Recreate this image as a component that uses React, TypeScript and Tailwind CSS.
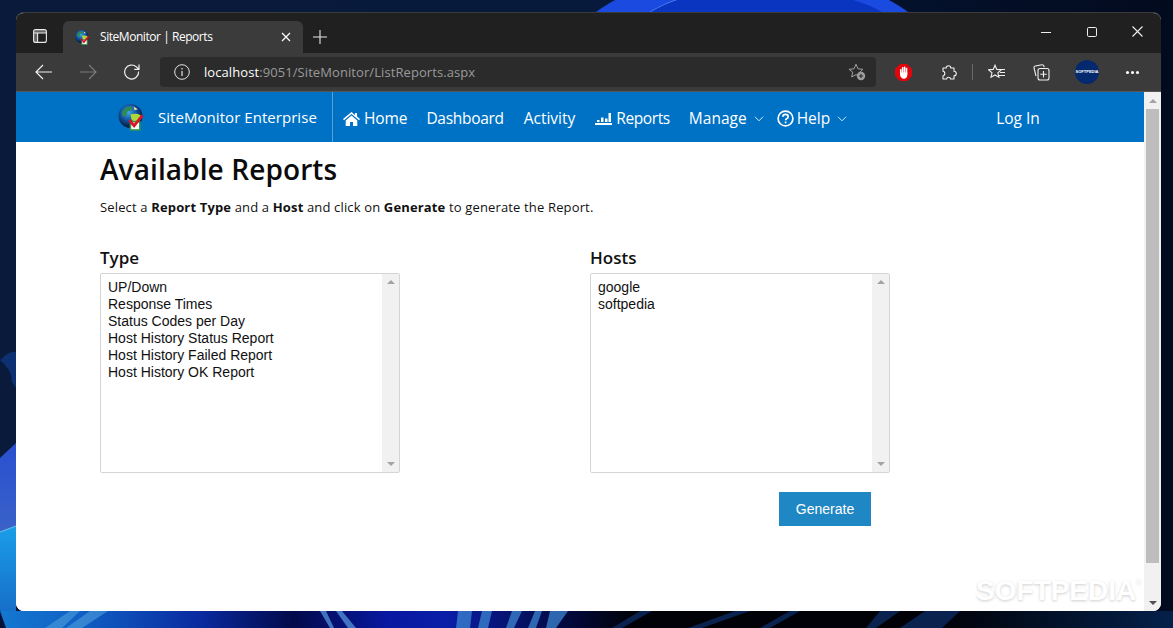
import React from "react";

const seg = { fontFamily: '"Open Sans", "Noto Sans", sans-serif' };

function Globe({ size = 26 }: { size?: number }) {
  return (
    <svg width={size} height={size} viewBox="0 0 26 26">
      <defs>
        <radialGradient id={`g${size}`} cx="0.42" cy="0.35" r="0.68">
          <stop offset="0" stopColor="#3fa6e6" />
          <stop offset="0.55" stopColor="#0d4a94" />
          <stop offset="1" stopColor="#040f22" />
        </radialGradient>
      </defs>
      <circle cx="12" cy="11.500" r="11.500" fill={`url(#g${size})`} />
      <path d="M4 7c3-4 7-5 10-4l-1 3-4 1-1 4-4 1z" fill="#2f8a52" />
      <path d="M12 10c3-1 8-1 10 1l-1 5-5 2-3-3z" fill="#a9d93c" />
      <path d="M15 2.500l4 2.500-3 1z" fill="#efe3b0" />
      <rect x="12" y="17" width="9" height="8" fill="#fff" stroke="#2e9a45" strokeWidth="1.500" />
      <path d="M11 15.500l4.500 5.500 8-10" fill="none" stroke="#e0122a" strokeWidth="2.800" />
    </svg>
  );
}

function Chevron() {
  return (
    <svg width="10" height="6" viewBox="0 0 10 6" fill="none" stroke="#d7e8f6" strokeWidth="1">
      <path d="M1 .8l4 4 4-4" />
    </svg>
  );
}

function NavLink({ children, className = "" }: { children: React.ReactNode; className?: string }) {
  return <a className={`flex items-center whitespace-nowrap text-[15.5px] text-white ${className}`}>{children}</a>;
}

function ListBox({ items }: { items: string[] }) {
  return (
    <div className="flex h-[200px] w-[300px] rounded-[2px] border border-[#d4d4d4] bg-white">
      <div
        className="flex-1 pl-[7px] pt-[5px] text-[14px] leading-[17px] text-[#111]"
        style={{ fontFamily: '"Liberation Sans", Arial, sans-serif' }}
      >
        {items.map((i) => (
          <div key={i}>{i}</div>
        ))}
      </div>
      <div className="flex w-[17px] flex-col items-center justify-between bg-[#f1f1f1] py-[6px]">
        <div className="h-0 w-0 border-x-[4px] border-b-[4px] border-x-transparent border-b-[#a3a3a3]" />
        <div className="h-0 w-0 border-x-[4px] border-t-[4px] border-x-transparent border-t-[#a3a3a3]" />
      </div>
    </div>
  );
}

export default function App() {
  return (
    <div className="relative h-[628px] w-[1173px] overflow-hidden bg-[#081530]" style={seg}>
      <svg className="absolute inset-0" width="1173" height="628" viewBox="0 0 1173 628">
        <defs>
          <linearGradient id="bg" x1="0" y1="0" x2="1" y2="0">
            <stop offset="0" stopColor="#0a1a3a" />
            <stop offset="0.5" stopColor="#071a3c" />
            <stop offset="1" stopColor="#020a1e" />
          </linearGradient>
          <linearGradient id="w1" x1="0" y1="0" x2="0" y2="1">
            <stop offset="0" stopColor="#2a4fd0" />
            <stop offset="1" stopColor="#3a62c8" />
          </linearGradient>
          <linearGradient id="w2" x1="0" y1="0" x2="0" y2="1">
            <stop offset="0" stopColor="#1a9ee8" />
            <stop offset="1" stopColor="#1565c4" />
          </linearGradient>
          <linearGradient id="bot" x1="0" y1="0" x2="1" y2="0">
            <stop offset="0" stopColor="#1478d0" />
            <stop offset="0.07" stopColor="#0f5fc4" />
            <stop offset="0.17" stopColor="#0a2aa0" />
            <stop offset="0.25" stopColor="#020a4a" />
            <stop offset="0.33" stopColor="#0818a0" />
            <stop offset="0.38" stopColor="#0a1ea8" />
            <stop offset="0.48" stopColor="#020a40" />
            <stop offset="0.54" stopColor="#000208" />
            <stop offset="0.8" stopColor="#000208" />
            <stop offset="1" stopColor="#04204a" />
          </linearGradient>
        </defs>
        <rect width="1173" height="628" fill="url(#bg)" />
        <path d="M0 360Q10 350 16 352V388L12 382Q12 370 0 360z" fill="#0d3a8a" opacity="0.7" />
        <path d="M0 458L16 443V532L0 532z" fill="url(#w1)" />
        <path d="M0 532L16 526V628H8L0 610z" fill="url(#w2)" />
        <path d="M0 532L16 526" stroke="#6cc4e8" strokeWidth="1" />
        <rect x="0" y="611" width="1173" height="17" fill="url(#bot)" />
        <path d="M0 611L6 628H0z" fill="#04123a" />
        <path d="M70 611H80L62 628H45zM90 611H108L82 628H66z" fill="#4a9ad8" opacity="0.65" />
        <path d="M320 611H326L334 628H330zM336 611H342L356 628H348z" fill="#5a9ee0" opacity="0.7" />
        <path d="M458 611H472L470 628H456zM482 611H492L488 628H478zM512 611H522L514 628H506zM535 611H542L536 628H528zM550 611H568L556 628H546z" fill="#3c86d0" opacity="0.75" />
        <path d="M640 611H652L622 628H612zM735 611H750L702 628H688zM790 611H800L770 628H760zM880 611H900L876 628H866zM925 611H960L942 628H900z" fill="#0c2a60" opacity="0.8" />
        <path d="M596 12C620 -5 640 -12 660 -16H850C875 -8 895 2 908 12z" fill="#1a4ae0" />
        <path d="M650 12C670 0 690 -6 720 -8H800C840 -6 865 2 882 12z" fill="#0a35c0" />
        <path d="M650 12C670 0 690 -6 720 -8" stroke="#4a7ae8" strokeWidth="1" fill="none" />
      </svg>

      <div className="relative ml-[16px] mt-[12px] flex h-[599px] w-[1145px] flex-col overflow-hidden rounded-[8px] border-t border-[#3a3a3a] bg-white">
        {/* tab strip */}
        <div className="flex h-[40px] shrink-0 items-end bg-[#202020]">
          <div className="flex h-[32px] w-[47px] items-center justify-center pb-[2px]">
            <svg width="14" height="14" viewBox="0 0 14 14" fill="none" stroke="#e8e8e8" strokeWidth="1.100">
              <rect x=".6" y=".6" width="12.800" height="12.800" rx="2" />
              <path d="M.6 4h12.800M4.600 4v9.400" />
              <path d="M1 1h12v3H1zM1 4h3.600v9H1z" fill="#e8e8e8" fillOpacity=".35" stroke="none" />
            </svg>
          </div>
          <div className="flex h-[32px] w-[240px] items-center rounded-t-[6px] bg-[#3b3b3b] pl-[12px]">
            <Globe size={15} />
            <span className="ml-[10px] text-[12px] tracking-[-0.45px] text-white">SiteMonitor | Reports</span>
            <svg className="ml-auto mr-[12px]" width="10" height="10" viewBox="0 0 10 10" stroke="#fff" strokeWidth="1.200">
              <path d="M1 1l8 8M9 1l-8 8" />
            </svg>
          </div>
          <div className="flex h-[32px] w-[34px] items-center justify-center">
            <svg width="14" height="14" viewBox="0 0 14 14" stroke="#e6e6e6" strokeWidth="1.100">
              <path d="M7 0v14M0 7h14" />
            </svg>
          </div>
          <div className="ml-auto flex h-[40px] items-center pb-[3px]">
            <div className="flex w-[46px] justify-center">
              <svg width="10" height="10" viewBox="0 0 10 10" stroke="#eee" strokeWidth="1"><path d="M0 5.500h10" /></svg>
            </div>
            <div className="flex w-[46px] justify-center">
              <svg width="10" height="10" viewBox="0 0 10 10" fill="none" stroke="#eee" strokeWidth="1"><rect x=".5" y=".5" width="9" height="9" rx="1.200" /></svg>
            </div>
            <div className="flex w-[46px] justify-center pr-[2px]">
              <svg width="11" height="11" viewBox="0 0 11 11" stroke="#eee" strokeWidth="1.100"><path d="M.5.5l10 10M10.500.5l-10 10" /></svg>
            </div>
          </div>
        </div>

        {/* toolbar */}
        <div className="flex h-[39px] shrink-0 items-center border-b border-[#555] bg-[#3b3b3b] pl-[19px]">
          <svg width="18" height="16" viewBox="0 0 18 16" fill="none" stroke="#f0f0f0" strokeWidth="1.200"><path d="M17 8H1M8 1L1 8l7 7" /></svg>
          <svg className="ml-[26px]" width="18" height="16" viewBox="0 0 18 16" fill="none" stroke="#7a7a7a" strokeWidth="1.200"><path d="M1 8h16M10 1l7 7-7 7" /></svg>
          <svg className="ml-[26px]" width="18" height="18" viewBox="0 0 18 18" fill="none" stroke="#f0f0f0" strokeWidth="1.200">
            <path d="M15.600 8.500a7 7 0 1 1-2.200-4.600L16 6.300M16 1.500v4.800h-4.800" />
          </svg>
          <div className="ml-[19px] flex h-[30px] w-[716px] items-center rounded-[4px] bg-[#2b2b2b] pl-[14px]">
            <svg width="16" height="16" viewBox="0 0 16 16" fill="none" stroke="#e4e4e4" strokeWidth="1">
              <circle cx="8" cy="8" r="7.300" />
              <path d="M8 7v5M8 4v1.400" strokeWidth="1.200" />
            </svg>
            <span className="ml-[14px] pt-px text-[13px] tracking-[0.08px] text-[#9a9a9a]">
              <span className="text-white">localhost</span>:9051/SiteMonitor/ListReports.aspx
            </span>
            <svg className="ml-auto mr-[10px]" width="18" height="18" viewBox="0 0 18 18" fill="none" stroke="#a0a0a0" strokeWidth="1">
              <path d="M8 1.200l2 4.600 5 .5-3.700 3.300 1 4.400L8 11.600 3.700 14l1-4.900L1 6.300l5-.5z" />
              <circle cx="13" cy="13" r="4.200" fill="#a0a0a0" stroke="none" />
              <path d="M13 10.800v4.400M10.800 13h4.400" stroke="#2b2b2b" strokeWidth="1.100" />
            </svg>
          </div>
          <div className="ml-[19px] flex items-center">
            <svg width="17" height="17" viewBox="0 0 17 17">
              <path d="M5 0h7l5 5v7l-5 5H5l-5-5V5z" fill="#e0060e" />
              <rect x="5" y="5" width="1.600" height="6" rx=".8" fill="#fff" />
              <rect x="6.900" y="3" width="1.600" height="7" rx=".8" fill="#fff" />
              <rect x="8.800" y="2.600" width="1.600" height="7" rx=".8" fill="#fff" />
              <rect x="10.700" y="3.800" width="1.600" height="7" rx=".8" fill="#fff" />
              <path d="M5 8.500h7.300V11c0 2.400-1.500 3.700-3.400 3.700C7 14.700 5 13 5 10.500z" fill="#fff" />
            </svg>
            <svg className="ml-[28px]" width="17" height="17" viewBox="0 0 17 17" fill="none" stroke="#f0f0f0" strokeWidth="1.100" strokeLinejoin="round">
              <path d="M3 4h3.200c0-3 4.600-3 4.600 0H14v3.200c3 0 3 4.600 0 4.600V15h-3.500c0-2.400-3.800-2.400-3.800 0H3v-3.300c2.400 0 2.400-4.400 0-4.400z" />
            </svg>
            <div className="ml-[15px] h-[16px] w-px bg-[#6a6a6a]" />
            <svg className="ml-[15px]" width="18" height="17" viewBox="0 0 18 17" fill="none" stroke="#f0f0f0" strokeWidth="1.100">
              <path d="M7 1.200l1.800 4.200 4.600.4-3.500 3 1 4.400L7 11l-4 2.200 1-4.400L.6 5.800l4.600-.4z" />
              <path d="M12 5.500h5M12 8.500h5M11 11.500h6" />
            </svg>
            <svg className="ml-[27px]" width="17" height="17" viewBox="0 0 17 17" fill="none" stroke="#f0f0f0" strokeWidth="1.100">
              <path d="M3 12L1 4c-.2-1 .3-1.800 1.200-2L9 .8c.9-.1 1.600.3 1.900 1.200l.3 1.200" />
              <rect x="5" y="4.500" width="11" height="11.500" rx="2" />
              <path d="M10.500 7v6.500M7.300 10.200h6.400" />
            </svg>
            <div
              className="ml-[25px] flex h-[24px] w-[24px] items-center justify-center rounded-full bg-[#04296f] text-[4px] font-bold text-white"
              style={{ fontFamily: '"Liberation Sans", sans-serif' }}
            >
              SOFTPEDIA
            </div>
            <div className="ml-[27px] flex gap-[2px]">
              <i className="h-[3px] w-[3px] rounded-full bg-white" />
              <i className="h-[3px] w-[3px] rounded-full bg-white" />
              <i className="h-[3px] w-[3px] rounded-full bg-white" />
            </div>
          </div>
        </div>

        {/* page + scrollbar */}
        <div className="flex min-h-0 flex-1">
          <div className="min-w-0 flex-1 bg-white">
            <nav className="flex h-[50px] items-stretch bg-[#0072c6]">
              <div className="flex w-[317px] items-center border-r border-[#5a9fd8] pl-[102px]">
                <Globe size={27} />
                <span className="ml-[13px] whitespace-nowrap text-[15px] tracking-[0.05px] text-white">SiteMonitor Enterprise</span>
              </div>
              <div className="flex items-center pl-[10px] pt-[3px]">
                <NavLink>
                  <svg className="mr-[4px]" width="17" height="14" viewBox="0 0 17 14" fill="#fff">
                    <path d="M8.500 0L0 7l1 1.300L8.500 2 16 8.300 17 7l-3-2.500V1h-2v1.900z" />
                    <path d="M2.700 8.400L8.500 3.600l5.800 4.800V14H10V10H7v4H2.700z" />
                  </svg>
                  <span className="tracking-[-0.1px]">Home</span>
                </NavLink>
                <NavLink className="ml-[19px] tracking-[-0.3px]">Dashboard</NavLink>
                <NavLink className="ml-[20px]">Activity</NavLink>
                <NavLink className="ml-[20px]">
                  <svg className="mr-[4px]" width="17" height="13" viewBox="0 0 17 13" fill="#fff">
                    <path d="M0 11h17v2H0zM2 8h2.500v2H2zM6 5.500h2.500V10H6zM10 6.500h2.500V10H10zM13.500 1H16v9h-2.500z" />
                  </svg>
                  <span className="tracking-[-0.4px]">Reports</span>
                </NavLink>
                <NavLink className="ml-[19px]">
                  Manage
                  <span className="ml-[7px]"><Chevron /></span>
                </NavLink>
                <NavLink className="ml-[13px]">
                  <svg className="mr-[3px]" width="17" height="17" viewBox="0 0 17 17" fill="none" stroke="#fff">
                    <circle cx="8.500" cy="8.500" r="7.400" strokeWidth="1.700" />
                    <path d="M5.900 6.700c0-3.200 5.300-3.200 5.300 0 0 2-2.600 1.900-2.600 3.600" strokeWidth="1.700" />
                    <path d="M8.600 11.500v1.800" strokeWidth="1.700" />
                  </svg>
                  Help
                  <span className="ml-[7px]"><Chevron /></span>
                </NavLink>
                <NavLink className="ml-[149px]">Log In</NavLink>
              </div>
            </nav>
            <main className="relative pl-[84px]">
              <h1 className="mt-[8px] text-[28px] font-semibold leading-[38px] tracking-[0.1px] text-[#0b0b0b]">Available Reports</h1>
              <p className="mt-[10px] text-[13px] leading-[18px] tracking-[0.15px] text-[#111]">
                Select a <b>Report Type</b> and a <b>Host</b> and click on <b>Generate</b> to generate the Report.
              </p>
              <div className="mt-[29px] flex gap-[190px]">
                <div>
                  <div className="mb-[2px] text-[17px] font-semibold leading-[26px] text-[#111]">Type</div>
                  <ListBox items={["UP/Down", "Response Times", "Status Codes per Day", "Host History Status Report", "Host History Failed Report", "Host History OK Report"]} />
                </div>
                <div>
                  <div className="mb-[2px] text-[17px] font-semibold leading-[26px] text-[#111]">Hosts</div>
                  <ListBox items={["google", "softpedia"]} />
                </div>
              </div>
              <div className="mt-[19px] flex w-[771px] justify-end">
                <button
                  className="h-[34px] w-[92px] bg-[#1f87c3] text-[14px] text-white"
                  style={{ fontFamily: '"Liberation Sans", Arial, sans-serif' }}
                >
                  Generate
                </button>
              </div>
              <div
                className="absolute left-[960px] top-[425px] whitespace-nowrap text-[28px] font-bold leading-[32px] text-white"
                style={{ fontFamily: '"Liberation Sans", sans-serif', textShadow: "0 1px 3px rgba(0,0,0,.2)" }}
              >
                SOFTPEDIA<span className="align-top text-[7px] leading-[14px]">®</span>
              </div>
            </main>
          </div>
          <div className="flex w-[17px] shrink-0 flex-col items-center bg-[#f1f1f1]">
            <div className="flex h-[17px] w-full items-center justify-center">
              <div className="h-0 w-0 border-x-[4px] border-b-[4px] border-x-transparent border-b-[#a3a3a3]" />
            </div>
            <div className="h-[454px] w-[13px] bg-[#bdbdbd]" />
            <div className="mt-auto flex h-[17px] w-full items-center justify-center">
              <div className="h-0 w-0 border-x-[4px] border-t-[4px] border-x-transparent border-t-[#505050]" />
            </div>
          </div>
        </div>
      </div>
    </div>
  );
}
